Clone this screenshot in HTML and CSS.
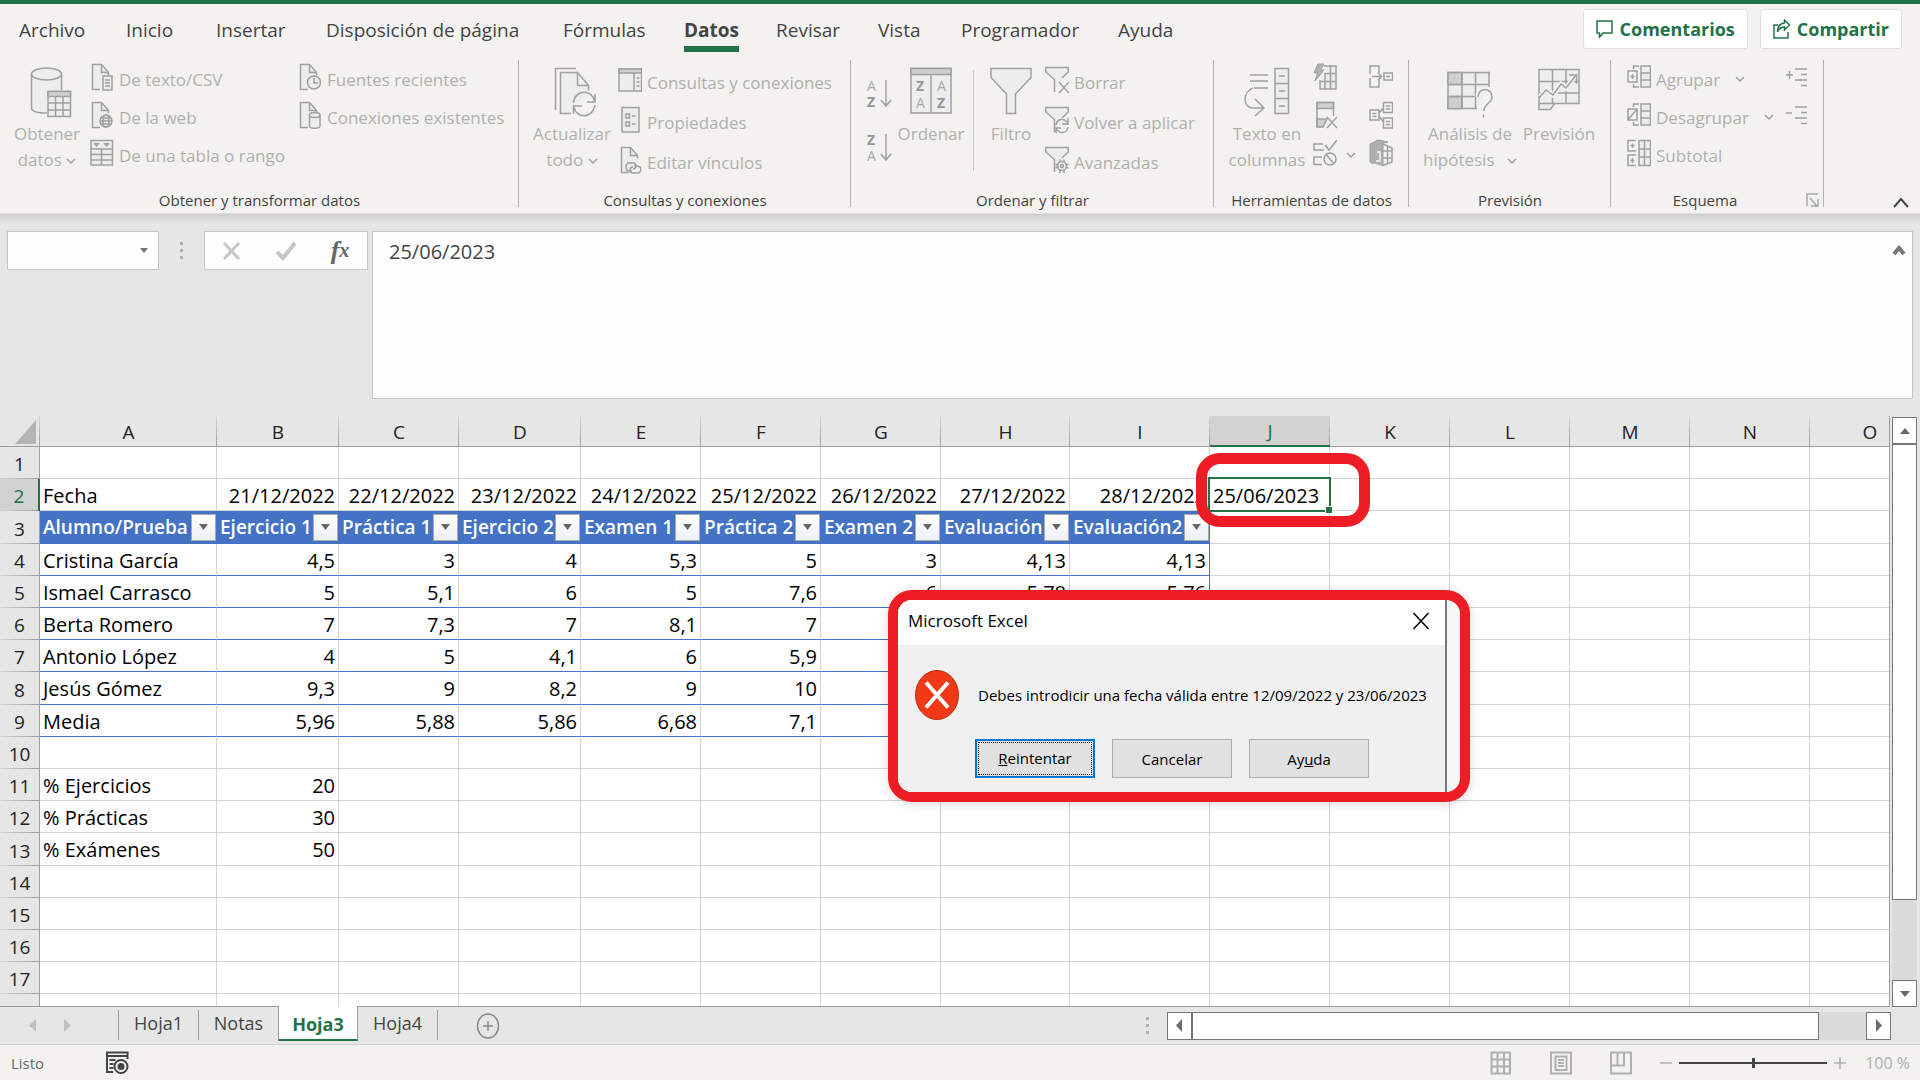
FILE: index.html
```html
<!DOCTYPE html>
<html lang="es">
<head>
    <meta charset="UTF-8">
    <meta name="viewport" content="width=device-width, initial-scale=1.0">
    <title>Notas - Excel</title>
    <link rel="stylesheet" href="styles.css">
</head>
<body>
    <svg class="symbols" aria-hidden="true">
        <symbol id="doc" viewBox="0 0 22 28">
            <path class="paper" d="M9 26.5H1.5v-25h9l7 8v3"/>
            <path d="M10.5 1.5v8h7"/>
        </symbol>
        <symbol id="funnel" viewBox="0 0 24 28">
            <path class="paper" d="M9.500 26V13.500L.8 6V1.500h22.400V6L17 12"/>
        </symbol>
        <symbol id="chevron" viewBox="0 0 10 8">
            <path d="M1 2l4 4 4-4"/>
        </symbol>
    </svg>

    <header class="tab-row">
        <nav class="tabs">
            <button type="button">Archivo</button>
            <button type="button">Inicio</button>
            <button type="button">Insertar</button>
            <button type="button">Disposición de página</button>
            <button type="button">Fórmulas</button>
            <button type="button" class="active">Datos</button>
            <button type="button">Revisar</button>
            <button type="button">Vista</button>
            <button type="button">Programador</button>
            <button type="button">Ayuda</button>
        </nav>
        <div class="share">
            <button type="button">
                <svg width="18" height="20" viewBox="0 0 18 20"><path d="M1 2h15v12H7l-3.500 4v-4H1z"/></svg>
                Comentarios
            </button>
            <button type="button">
                <svg width="18" height="20" viewBox="0 0 18 20"><path d="M5 6H1v13h14v-6"/><path d="M11.500 1l5 5-5 5V8C8 8 6 9.500 4.500 13 4.500 8 7 4.500 11.500 4z"/></svg>
                Compartir
            </button>
        </div>
    </header>

    <section class="ribbon">
        <div class="group">
            <div class="group-body get-data">
                <button type="button" class="big">
                    <svg width="50" height="52" viewBox="-8 0 50 52">
                        <path class="paper" d="M17 46C7 46 1.500 44 1.500 41V7h30v16"/>
                        <ellipse class="paper" cx="16.500" cy="7" rx="15" ry="6"/>
                        <path class="paper" d="M18 24.500h22.500v25H18z"/>
                        <path class="shade" d="M18 24.500h22.500v5H18z"/>
                        <path d="M18 36h22.500M18 43h22.500M25.500 30v19.500M33 30v19.500"/>
                    </svg>
                    <span>Obtener<br>datos <svg class="chev"><use href="#chevron"/></svg></span>
                </button>
                <div class="small-list">
                    <button type="button"><i><svg width="22" height="28" viewBox="0 0 22 28"><use href="#doc"/><path class="paper" d="M12 13h9v14h-9z"/><path d="M14 17h5M14 20h5M14 23h5"/></svg></i>De texto/CSV</button>
                    <button type="button"><i><svg width="22" height="28" viewBox="0 0 22 28"><use href="#doc"/><circle class="paper" cx="15" cy="20" r="6"/><ellipse cx="15" cy="20" rx="3" ry="6"/><path d="M9 20h12M10 17h10M10 23h10"/></svg></i>De la web</button>
                    <button type="button"><i><svg width="24" height="28" viewBox="0 0 24 28"><path class="paper" d="M1 1.500h21.500V26H1z"/><path d="M1 10h21.500M1 15.500h21.500M1 21h21.500M11.500 10v16"/><path class="solid" d="M4 4.500h5l-2.500 3zM14 4.500h5l-2.500 3z"/></svg></i>De una tabla o rango</button>
                </div>
                <div class="small-list">
                    <button type="button"><i><svg width="22" height="28" viewBox="0 0 22 28"><use href="#doc"/><circle class="paper" cx="15" cy="19.500" r="6.500"/><path d="M15 15v5h4"/></svg></i>Fuentes recientes</button>
                    <button type="button"><i><svg width="22" height="28" viewBox="0 0 22 28"><use href="#doc"/><path class="paper" d="M10.500 14v11c0 3 10.500 3 10.500 0V14"/><ellipse class="paper" cx="15.700" cy="14" rx="5.300" ry="2.500"/></svg></i>Conexiones existentes</button>
                </div>
            </div>
            <div class="group-name">Obtener y transformar datos</div>
        </div>

        <div class="group">
            <div class="group-body queries">
                <button type="button" class="big">
                    <svg width="48" height="52" viewBox="-6 0 48 52">
                        <path d="M1.500 43V1.500H22"/>
                        <path class="paper" d="M17 46.500H6.500v-41h17l11 13v5"/>
                        <path d="M23.500 5.500v13h11"/>
                        <path d="M19.500 36c1-14 19-14 21-2M41 27v8h-8M41 38c-2 14-19 14-21 2M19.500 47v-8H28"/>
                    </svg>
                    <span>Actualizar<br>todo <svg class="chev"><use href="#chevron"/></svg></span>
                </button>
                <div class="small-list tall">
                    <button type="button"><i><svg width="24" height="28" viewBox="0 0 24 28"><path class="paper" d="M1 3h22.500v22H1z"/><path class="shade" d="M1 3h22.500v4H1z"/><path d="M16 7v18M18.500 12h3M18.500 16h3M18.500 20h3"/></svg></i>Consultas y conexiones</button>
                    <button type="button"><i><svg width="24" height="28" viewBox="0 0 24 28"><path class="paper" d="M4 1.500h17V26H4z"/><path d="M8 8h3.500v4H8zM8 16h3.500v4H8zM14 10h3.500M14 18h3.500"/></svg></i>Propiedades</button>
                    <button type="button"><i><svg width="24" height="28" viewBox="0 0 24 28"><g transform="translate(2 0)"><use href="#doc" width="22" height="28"/></g><path d="M14 25h-3c-4 0-4-8 0-8h4c4 0 4 6 0 6M16 20h3c5 0 5 7 0 7h-4c-4 0-4-6 0-6"/></svg></i>Editar vínculos</button>
                </div>
            </div>
            <div class="group-name">Consultas y conexiones</div>
        </div>

        <div class="group">
            <div class="group-body sort-filter">
                <div class="sorters">
                    <button type="button" aria-label="Ordenar de A a Z"><svg width="28" height="34" viewBox="0 0 28 34"><text x="2" y="13">A</text><text class="strong" x="2" y="29">Z</text><path d="M21 2v26M16 22l5 6 5-6"/></svg></button>
                    <button type="button" aria-label="Ordenar de Z a A"><svg width="28" height="34" viewBox="0 0 28 34"><text class="strong" x="2" y="13">Z</text><text x="2" y="29">A</text><path d="M21 2v26M16 22l5 6 5-6"/></svg></button>
                </div>
                <button type="button" class="big">
                    <svg width="42" height="52" viewBox="0 0 42 52">
                        <path class="paper" d="M1 1.500h40V46H1z"/>
                        <path class="shade" d="M1 1.500h40v6H1z"/>
                        <path d="M21 7.500V46"/>
                        <text class="strong" x="6" y="24">Z</text><text x="6" y="41">A</text>
                        <text x="27" y="24">A</text><text class="strong" x="27" y="41">Z</text>
                    </svg>
                    <span>Ordenar</span>
                </button>
                <div class="rule"></div>
                <button type="button" class="big">
                    <svg width="42" height="52" viewBox="0 0 42 52"><path class="paper" d="M1 1.500h40v9L25.500 27v19.500h-9V27L1 10.500z"/></svg>
                    <span>Filtro</span>
                </button>
                <div class="small-list tall">
                    <button type="button"><i><svg width="24" height="28" viewBox="0 0 24 28"><use href="#funnel"/><path d="M14 16l10 11M24 16L14 27"/></svg></i>Borrar</button>
                    <button type="button"><i><svg width="24" height="28" viewBox="0 0 24 28"><use href="#funnel"/><path d="M11 19c1-7 9-7 11.500-2M23 12v6h-6M23 21c-1 7-9 7-11.500 2M11 27v-5h5"/></svg></i>Volver a aplicar</button>
                    <button type="button"><i><svg width="24" height="28" viewBox="0 0 24 28"><use href="#funnel"/><circle cx="17" cy="20" r="4.500"/><circle cx="17" cy="20" r="1.500"/><path d="M15 13.500v3M19 13.500v3M15 24v3M19 24v3M10.500 18l3 1M10.500 22l3-1M23.500 18l-3 1M23.500 22l-3-1"/></svg></i>Avanzadas</button>
                </div>
            </div>
            <div class="group-name">Ordenar y filtrar</div>
        </div>

        <div class="group">
            <div class="group-body data-tools">
                <button type="button" class="big">
                    <svg width="46" height="52" viewBox="0 0 46 52">
                        <path d="M6 8h18M6 14h18M10 21h14M9 21C-2 25-1 41 9 41h10M11 32l9 9-9 8"/>
                        <path class="paper" d="M31 1.500h13.500v45H31zM31 16.500h13.500M31 31.500h13.500"/>
                        <path d="M35 9h6M35 24h6M35 39h6"/>
                    </svg>
                    <span>Texto en<br>columnas</span>
                </button>
                <div class="small-list icons">
                    <button type="button" aria-label="Relleno rápido"><i><svg width="24" height="28" viewBox="0 0 24 28"><path class="paper" d="M11 3h12v23H7v-9"/><path d="M7 18.500h16M11 10.500h12M12 10v16M17.500 3v23"/><path class="solid" d="M5 1h6L7.500 7H11L2 18l2.500-8H1z"/></svg></i></button>
                    <button type="button" aria-label="Quitar duplicados"><i><svg width="24" height="28" viewBox="0 0 24 28"><path class="shade" d="M4 1.500h16.500v6H4zM4 18h10l-4 8H4z"/><path d="M4 1.500h16.500V15M4 1.500V26M14 16l10 11M24 16L14 27"/></svg></i></button>
                    <button type="button" aria-label="Validación de datos"><i><svg width="24" height="28" viewBox="0 0 24 28"><path d="M10 5H1v6h10M9 18H1v7.500h8M12 6l4 5L24 1"/><circle cx="17" cy="20" r="6"/><path d="M13 15l8 10"/></svg></i><svg class="chev"><use href="#chevron"/></svg></button>
                </div>
                <div class="small-list icons">
                    <button type="button" aria-label="Consolidar"><i><svg width="24" height="28" viewBox="0 0 24 28"><path d="M1 11V3h9v8M1 15v9h9v-8M3 13.500h9M9 10l3.500 3.500L9 17"/><path d="M15 10h8.500v7H15zM17 13.500h4"/></svg></i></button>
                    <button type="button" aria-label="Relaciones"><i><svg width="24" height="28" viewBox="0 0 24 28"><path d="M1 9h9v10H1zM14.500 1.500h9v10h-9zM14.500 17h9v10h-9zM10 12l4.500-5M10 15l4.500 6M3.500 12.500h4M3.500 15.500h4M17 5h4M17 8h4M17 20.500h4M17 23.500h4"/></svg></i></button>
                    <button type="button" aria-label="Modelo de datos"><i><svg width="24" height="28" viewBox="0 0 24 28"><path class="solid" d="M1 5l8-4 10 2-8 2-7 3v17l-3-2z"/><path class="solid" d="M5 9l9-4v21.500L5 24z"/><path d="M14 5l9 4v14l-9 3.500M14 12h9M14 19h9M18.500 7v18"/><path class="light" d="M8 13h3v9H7"/></svg></i></button>
                </div>
            </div>
            <div class="group-name">Herramientas de datos</div>
        </div>

        <div class="group">
            <div class="group-body forecast">
                <button type="button" class="big">
                    <svg width="46" height="52" viewBox="0 0 46 52">
                        <path class="paper" d="M30 41.500H1v-36h41V20"/>
                        <path class="shade" d="M1 5.500h14v12H1zM1 29.500h14v12H1z"/>
                        <path d="M1 17.500h41M1 29.500h30M15 5.500v36M28.500 5.500v36"/>
                        <path class="halo" d="M31 30c0-10 14-10 14 0 0 7-8 6-8 14"/>
                        <path d="M31 30c0-10 14-10 14 0 0 7-8 6-8 14M36.500 47.500v3"/>
                    </svg>
                    <span>Análisis de<br>hipótesis <svg class="chev wide"><use href="#chevron"/></svg></span>
                </button>
                <button type="button" class="big">
                    <svg width="42" height="52" viewBox="0 0 42 52">
                        <path class="paper" d="M1 2.500h40v34H17l-5 6H1z"/>
                        <path d="M1 14.500h40M1 26h40M1 36.500h16M14.500 2.500v34M28 2.500v34"/>
                        <path class="halo" d="M2 30l6-7 7 5 8-11 5 4L38 8"/>
                        <path d="M1 31l7-8 7 5 8-11 5 4L38 8M31 8h7.500v9"/>
                    </svg>
                    <span>Previsión</span>
                </button>
            </div>
            <div class="group-name">Previsión</div>
        </div>

        <div class="group">
            <div class="group-body outline">
                <div class="small-list">
                    <button type="button"><i><svg width="24" height="28" viewBox="0 0 24 28"><path class="paper" d="M14 3h9.500v21H14z"/><path d="M14 10h9.500M14 17h9.500M6.500 6V3H12M6.500 21v3H12M1 8h9v11H1zM3.500 13.500h4M5.500 11v5"/></svg></i>Agrupar <svg class="chev wide"><use href="#chevron"/></svg></button>
                    <button type="button"><i><svg width="24" height="28" viewBox="0 0 24 28"><path class="paper" d="M14 3h9.500v21H14z"/><path d="M14 10h9.500M14 17h9.500M6.500 6V3H12M6.500 21v3H12M1 8h9v11H1zM1 19l9-11"/></svg></i>Desagrupar <svg class="chev wide"><use href="#chevron"/></svg></button>
                    <button type="button"><i><svg width="24" height="28" viewBox="0 0 24 28"><path class="paper" d="M12 1.500h11.500v25H12z"/><path d="M12 10h11.500M12 18h11.500M17.500 1.500v25M9 1.500H1V12h8M9 16H1v10.500h8M3.500 6.500h4M5.500 4.500v4.500M3.500 21.500h4M5.500 19v5"/></svg></i>Subtotal</button>
                </div>
                <div class="small-list icons">
                    <button type="button" aria-label="Mostrar detalle"><i><svg width="24" height="28" viewBox="0 0 24 28"><path d="M1 12h7M4.500 8v8M10 6h12M16 11.500h6M10 17h12M16 22.500h6"/></svg></i></button>
                    <button type="button" aria-label="Ocultar detalle"><i><svg width="24" height="28" viewBox="0 0 24 28"><path d="M1 12h6M10 6h12M16 11.500h6M10 17h12M16 22.500h6"/></svg></i></button>
                </div>
            </div>
            <div class="group-name with-launcher">
                <span>Esquema</span>
                <button type="button" aria-label="Opciones de esquema"><svg width="13" height="14" viewBox="0 0 13 14"><path d="M1 13V1h11M4 5l7 8M12 6v7H5"/></svg></button>
            </div>
        </div>

        <div class="collapse">
            <button type="button" aria-label="Contraer la cinta"><svg width="16" height="12" viewBox="0 0 16 12"><path d="M1 10l7-8 7 8"/></svg></button>
        </div>
    </section>

    <section class="formula-bar">
        <div class="name-box">
            <input type="text" aria-label="Cuadro de nombres">
            <button type="button" aria-label="Lista de nombres"><svg width="8" height="6" viewBox="0 0 8 6"><path d="M0 0h8L4 5z"/></svg></button>
        </div>
        <div class="dots"><b></b><b></b><b></b></div>
        <div class="edit-buttons">
            <button type="button" aria-label="Cancelar entrada"><svg width="20" height="20" viewBox="0 0 20 20"><path class="cross" d="M2 2l15 16M17 2L2 18"/></svg></button>
            <button type="button" aria-label="Introducir"><svg width="20" height="20" viewBox="0 0 20 20"><path class="tick" d="M1 11l6 6L19 2"/></svg></button>
            <button type="button" class="fx" aria-label="Insertar función">f<small>x</small></button>
        </div>
        <div class="formula-box">
            <textarea aria-label="Barra de fórmulas">25/06/2023</textarea>
            <button type="button" aria-label="Contraer barra"><svg width="14" height="12" viewBox="0 0 14 12"><path d="M2 9l5-6 5 6"/></svg></button>
        </div>
    </section>

    <main class="sheet-area">
        <div class="sheet">
            <table>
                <colgroup id="cols"></colgroup>
                <thead><tr id="letters"></tr></thead>
                <tbody id="rows"></tbody>
            </table>
        </div>
        <div class="vscroll">
            <button type="button" aria-label="Subir"><svg width="12" height="8" viewBox="0 0 12 8"><path d="M1 7l5-6 5 6z"/></svg></button>
            <div class="track"><div class="thumb"></div></div>
            <button type="button" aria-label="Bajar"><svg width="12" height="8" viewBox="0 0 12 8"><path d="M1 1l5 6 5-6z"/></svg></button>
        </div>
    </main>

    <section class="sheet-bar">
        <div class="sheet-nav">
            <button type="button" aria-label="Hoja anterior"><svg width="7" height="13" viewBox="0 0 7 13"><path d="M7 0v13L0 6.500z"/></svg></button>
            <button type="button" aria-label="Hoja siguiente"><svg width="7" height="13" viewBox="0 0 7 13"><path d="M0 0v13l7-6.500z"/></svg></button>
        </div>
        <div class="sheet-tabs">
            <button type="button">Hoja1</button>
            <button type="button">Notas</button>
            <button type="button" class="active">Hoja3</button>
            <button type="button">Hoja4</button>
        </div>
        <button type="button" class="add-sheet" aria-label="Hoja nueva"><svg width="24" height="26" viewBox="0 0 24 26"><ellipse cx="12" cy="13" rx="10.500" ry="12"/><path d="M7 13h10M12 8v10"/></svg></button>
        <div class="dots small"><b></b><b></b><b></b></div>
        <div class="hscroll">
            <button type="button" aria-label="Izquierda"><svg width="7" height="13" viewBox="0 0 7 13"><path d="M6 0v13L0 6.500z"/></svg></button>
            <div class="track"><div class="thumb"></div></div>
            <button type="button" aria-label="Derecha"><svg width="7" height="13" viewBox="0 0 7 13"><path d="M1 0v13l6-6.500z"/></svg></button>
        </div>
    </section>

    <footer class="status">
        <span>Listo</span>
        <button type="button" class="macro" aria-label="Grabar macro"><svg width="23" height="24" viewBox="0 0 23 24"><path d="M7 21H1V1.500h20.500V8M1 5h20.500M3.500 9h6M3.500 13h4M3.500 17h4"/><circle cx="15" cy="15.500" r="6.500"/><circle class="dot" cx="15" cy="15.500" r="2.500"/></svg></button>
        <div class="views">
            <button type="button" aria-label="Normal"><svg width="22" height="24" viewBox="0 0 22 24"><path d="M1.500 1.500h18.500v21H1.500zM1.500 8.500H20M1.500 15.500H20M7.500 1.500v21M14 1.500v21"/></svg></button>
            <button type="button" aria-label="Diseño de página"><svg width="22" height="24" viewBox="0 0 22 24"><path d="M1 1.500h20v21H1zM5.500 5.500h11v13.500h-11zM8 9h6M8 12h6M8 15h6"/></svg></button>
            <button type="button" aria-label="Salto de página"><svg width="22" height="24" viewBox="0 0 22 24"><path d="M1 1.500h20v21H1zM1 14.500h13v-13M7.500 1.500v13"/></svg></button>
        </div>
        <div class="zoom">
            <button type="button" aria-label="Alejar"><svg width="12" height="12" viewBox="0 0 12 12"><path d="M0 6h12"/></svg></button>
            <input type="range" min="0" max="100" value="50" aria-label="Zoom">
            <button type="button" aria-label="Acercar"><svg width="12" height="12" viewBox="0 0 12 12"><path d="M0 6h12M6 0v12"/></svg></button>
            <span>100 %</span>
        </div>
    </footer>

    <div class="alert-mark">
        <div class="alert" role="alertdialog" aria-labelledby="alertTitle" aria-describedby="alertText">
            <div class="alert-title">
                <span id="alertTitle">Microsoft Excel</span>
                <button type="button" aria-label="Cerrar"><svg width="18" height="18" viewBox="0 0 18 18"><path d="M1.500 1l15 16M16.500 1l-15 16"/></svg></button>
            </div>
            <div class="alert-body">
                <div class="alert-message">
                    <svg width="44" height="50" viewBox="0 0 44 50"><ellipse cx="22" cy="25" rx="21.500" ry="24.500"/><path d="M11 12.500l22 25M33 12.500l-22 25"/></svg>
                    <span id="alertText">Debes introdicir una fecha válida entre 12/09/2022 y 23/06/2023</span>
                </div>
                <div class="alert-buttons">
                    <button type="button" class="default"><span><u>R</u>eintentar</span></button>
                    <button type="button"><span>Cancelar</span></button>
                    <button type="button"><span>Ay<u>u</u>da</span></button>
                </div>
            </div>
        </div>
    </div>

    <script src="script.js"></script>
</body>
</html>
```
FILE: styles.css
```css
* {
    box-sizing: border-box;
}
body {
    margin: 0;
    height: 100vh;
    display: flex;
    flex-direction: column;
    overflow: hidden;
    position: relative;
    background-color: #e6e6e6;
    color: #444;
    font-family: "Open Sans", "Noto Sans", sans-serif;
    font-size: 18px;
}
button {
    padding: 0;
    border: none;
    background: none;
    color: inherit;
    font: inherit;
    white-space: nowrap;
    cursor: pointer;
}
svg {
    display: block;
    flex: none;
    fill: none;
    stroke: currentColor;
    stroke-width: 2;
}
.symbols {
    position: absolute;
    width: 0;
    height: 0;
}

/* Pestañas de la cinta */
.tab-row {
    display: flex;
    justify-content: space-between;
    align-items: flex-start;
    height: 60px;
    padding: 5px 18px 0 19px;
    border-top: 4px solid #217346;
    background-color: #f3f2f1;
    font-size: 19px;
}
.tabs {
    display: grid;
    grid-template-columns: 107px 90px 110px 237px 121px 92px 102px 83px 157px 70px;
}
.tabs button {
    position: relative;
    height: 44px;
    text-align: left;
    justify-self: start;
    line-height: 42px;
    padding-bottom: 2px;
}
.tabs .active {
    font-weight: 700;
}
.tabs .active::after {
    content: "";
    position: absolute;
    left: 0;
    right: 0;
    bottom: 1px;
    height: 6px;
    background-color: #217346;
}
.share {
    display: flex;
    gap: 12px;
}
.share button {
    display: flex;
    align-items: center;
    gap: 6px;
    height: 40px;
    padding: 0 12px;
    border: 1px solid #e1dfdd;
    border-radius: 3px;
    background-color: #fff;
    color: #217346;
    font-size: 18px;
    font-weight: 700;
}
.share svg {
    stroke-width: 1.5;
}

/* Cinta */
.ribbon {
    display: grid;
    grid-template-columns: 519px 332px 363px 195px 202px 213px 1fr;
    height: 154px;
    border-bottom: 1px solid #e1dfdd;
    background-color: #f3f2f1;
    flex: none;
}
.group {
    display: flex;
    flex-direction: column;
    justify-content: space-between;
    background: linear-gradient(#b3b0ad, #b3b0ad) right top / 1px 147px no-repeat;
}
.group-body {
    display: flex;
    align-items: flex-start;
    color: #b1afad;
    font-size: 17px;
}
.group-body > * {
    flex: none;
}
.group-body svg {
    color: #a0a0a0;
    stroke-width: 1.5;
}
.group-name {
    height: 26px;
    line-height: 26px;
    font-size: 15px;
    text-align: center;
}
.with-launcher {
    display: grid;
    grid-template-columns: 1fr 13px;
    align-items: center;
    padding: 0 5px 0 0;
}
.with-launcher span {
    padding-right: 7px;
}
.with-launcher svg {
    color: #a8a8a8;
    stroke-width: 1.5;
}
.get-data {
    padding-left: 14px;
}
.get-data .big {
    width: 66px;
    margin-right: 10px;
}
.get-data .small-list {
    width: 208px;
}
.queries {
    padding-left: 12px;
}
.queries .big {
    width: 82px;
    margin-right: 5px;
}
.sort-filter {
    padding-left: 14px;
}
.sort-filter .big {
    width: 68px;
}
.data-tools {
    padding-left: 10px;
}
.data-tools .big {
    width: 86px;
    margin-right: 3px;
}
.forecast {
    padding-left: 14px;
}
.forecast .big {
    width: 94px;
}
.forecast .big:last-child {
    width: 84px;
}
.outline {
    padding-left: 16px;
}
.outline .small-list:first-child {
    width: 158px;
}
.big {
    display: flex;
    flex-direction: column;
    align-items: center;
    padding-top: 7px;
    line-height: 26px;
}
.big > svg {
    margin-bottom: 2px;
}
.small-list button {
    display: flex;
    align-items: center;
    height: 38px;
}
.small-list.tall {
    padding-top: 2px;
}
.small-list.tall button {
    height: 40px;
}
.small-list i {
    display: flex;
    justify-content: center;
    width: 24px;
    margin-right: 5px;
    margin-bottom: 4px;
}
.icons {
    width: 56px;
}
.chev {
    display: inline-block;
    width: 10px;
    height: 8px;
    vertical-align: middle;
}
.chev.wide {
    margin-left: 8px;
}
.small-list .chev {
    margin-left: 4px;
}
.small-list .chev.wide {
    margin-left: 15px;
}
.paper {
    fill: #ededee;
}
.shade {
    fill: #cfcfcf;
}
.solid {
    fill: #b0b0b0;
    stroke-width: 1;
}
.light {
    stroke: #f3f2f1;
}
.halo {
    stroke: #f3f2f1;
    stroke-width: 5;
}
.group-body text {
    fill: #a8a8a8;
    stroke: none;
    font-size: 14px;
    line-height: 14px;
}
.group-body .strong {
    fill: #959595;
    font-weight: 700;
}
.sorters {
    display: flex;
    flex-direction: column;
    gap: 20px;
    padding-top: 18px;
    margin-right: 4px;
}
.rule {
    width: 1px;
    height: 101px;
    margin: 10px 3px 0 8px;
    background-color: #c8c6c4;
}
.collapse {
    display: flex;
    justify-content: flex-end;
    align-items: flex-end;
    padding: 0 11px 4px 0;
}

/* Barra de fórmulas */
.formula-bar {
    display: flex;
    align-items: flex-start;
    padding: 17px 7px;
    background: linear-gradient(#cdcdcd, #e6e6e6 10px);
    flex: none;
}
.name-box, .edit-buttons, .formula-box {
    display: flex;
    border: 1px solid #c6c6c6;
    background-color: #fdfdfd;
}
.name-box {
    width: 152px;
    height: 39px;
}
.name-box input {
    flex: 1;
    min-width: 0;
    border: none;
    background: none;
}
.name-box button {
    width: 28px;
    color: #777;
}
.name-box svg, .formula-box svg {
    margin: 0 auto;
}
.name-box path {
    fill: currentColor;
    stroke: none;
}
.dots {
    display: flex;
    flex-direction: column;
    justify-content: center;
    align-items: center;
    gap: 4px;
    width: 45px;
    height: 39px;
}
.dots b {
    width: 3px;
    height: 3px;
    background-color: #b0b0b0;
}
.edit-buttons {
    width: 164px;
    height: 39px;
    margin-right: 4px;
}
.edit-buttons button {
    flex: 1;
    display: flex;
    align-items: center;
    justify-content: center;
    color: #c6c6c6;
}
.edit-buttons .cross {
    stroke-width: 3;
}
.edit-buttons .tick {
    stroke-width: 4;
}
.edit-buttons .fx {
    color: #666;
    font: italic bold 26px "Liberation Serif", serif;
}
.fx small {
    font-size: 20px;
}
.formula-box {
    flex: 1;
    height: 168px;
}
.formula-box textarea {
    flex: 1;
    padding: 6px 16px;
    border: none;
    outline: none;
    resize: none;
    background: none;
    color: #444;
    font: 20px/28px "Open Sans", "Noto Sans", sans-serif;
}
.formula-box button {
    width: 26px;
    height: 38px;
    color: #777;
}
.formula-box svg {
    stroke-width: 4;
}

/* Hoja */
.sheet-area {
    display: flex;
    flex: 1;
    min-height: 0;
}
.sheet {
    flex: 1;
    min-width: 0;
    overflow: hidden;
    border-right: 1px solid #9e9e9e;
    border-bottom: 1px solid #9e9e9e;
}
table {
    table-layout: fixed;
    width: 0;
    border-collapse: separate;
    border-spacing: 0;
    color: #000;
    font-size: 20px;
    line-height: 28px;
}
th, td {
    height: 32px;
    padding: 2px 3px 0 3px;
    overflow: hidden;
    white-space: nowrap;
}
tbody tr:nth-child(5n+3) > * {
    height: 33px;
}
thead th {
    height: 31px;
    padding: 2px 0 0 0;
    border-bottom: 1px solid #9e9e9e;
    background: linear-gradient(#d4d4d4, #9e9e9e) right / 1px 100% no-repeat #e6e6e6;
    color: #222;
    font-size: 19px;
    font-weight: 400;
    line-height: 27px;
}
tbody th {
    padding: 2px 0 0 0;
    border-right: 1px solid #9e9e9e;
    background: linear-gradient(to right, #d4d4d4, #9e9e9e) bottom / 100% 1px no-repeat #e6e6e6;
    color: #222;
    font-size: 19px;
    font-weight: 400;
}
thead .selected {
    border-bottom: 2px solid #217346;
    background-color: #d2d2d2;
    color: #217346;
}
tbody .selected {
    border-right: 2px solid #217346;
    background-color: #d2d2d2;
    color: #217346;
}
.corner path {
    fill: #b4b4b4;
    stroke: none;
}
.corner svg {
    margin-left: 15px;
}
td {
    border-right: 1px solid #d4d4d4;
    border-bottom: 1px solid #d4d4d4;
    background-color: #fff;
    text-align: right;
}
td.text {
    text-align: left;
}
tr.list td:nth-child(-n+10) {
    border-bottom-color: #4472c4;
}
tr.list td:nth-child(10) {
    border-right-color: #4472c4;
}
td.heading {
    padding: 0 0 0 3px;
    border-color: #4472c4;
    background-color: #4472c4;
    color: #fff;
    font-weight: 600;
    font-size: 19px;
}
.heading div {
    display: flex;
    align-items: center;
    justify-content: space-between;
}
.heading span {
    min-width: 0;
}
.heading button {
    flex: none;
    width: 25px;
    height: 27px;
    border: 1px solid #ababab;
    background: linear-gradient(#fff, #eef0f4);
    color: #666;
}
.heading svg {
    margin: 0 auto;
    fill: currentColor;
    stroke: none;
}
td.editing {
    position: relative;
    overflow: visible;
    text-align: left;
}
.editing::before {
    content: "";
    position: absolute;
    inset: -2px;
    border: 2px solid #217346;
}
.editing::after {
    content: "";
    position: absolute;
    right: -3px;
    bottom: -3px;
    width: 6px;
    height: 6px;
    border: 1px solid #fff;
    border-width: 1px 0 0 1px;
    background-color: #217346;
}
.mark {
    position: absolute;
    z-index: 1;
    inset: -26px -41px -17px -14px;
    border: 11px solid #ee1c25;
    border-radius: 24px;
}

/* Barras de desplazamiento */
.vscroll {
    display: flex;
    flex-direction: column;
    flex: none;
    width: 25px;
    margin: 1px 3px 0 2px;
}
.vscroll button, .hscroll button {
    display: flex;
    align-items: center;
    justify-content: center;
    flex: none;
    border: 1px solid #777;
    background-color: #fff;
    color: #6a6a6a;
}
.vscroll button {
    height: 27px;
}
.vscroll path, .hscroll path, .sheet-nav path {
    fill: currentColor;
    stroke: none;
}
.track {
    flex: 1;
    background-color: #dadada;
}
.thumb {
    border: 1px solid #777;
    background-color: #fff;
}
.vscroll .thumb {
    height: 85%;
}
.hscroll {
    display: flex;
    width: calc(38% - 6px);
    height: 28px;
    margin-right: 29px;
}
.hscroll button {
    width: 25px;
}
.hscroll .thumb {
    width: 93%;
    height: 100%;
}

/* Hojas del libro */
.sheet-bar {
    display: flex;
    align-items: center;
    flex: none;
    height: 38px;
    border-bottom: 1px solid #d0d0d0;
}
.sheet-nav {
    display: flex;
    gap: 28px;
    width: 118px;
    padding-left: 29px;
    color: #c0c0c0;
}
.sheet-tabs {
    display: flex;
    align-self: flex-start;
}
.sheet-tabs button {
    width: 80px;
    height: 30px;
    margin-top: 3px;
    padding-bottom: 3px;
    border-left: 1px solid #9e9e9e;
    line-height: 27px;
}
.sheet-tabs button:last-child {
    border-right: 1px solid #9e9e9e;
}
.sheet-tabs .active {
    position: relative;
    height: 35px;
    margin-top: -1px;
    padding: 3px 0 0 0;
    border-bottom: 2px solid #217346;
    border-right: 1px solid #9e9e9e;
    background-color: #fff;
    color: #217346;
    font-weight: 700;
}
.sheet-tabs .active + button {
    border-left: none;
}
.add-sheet {
    margin-left: 38px;
    margin-right: auto;
    color: #8a8a8a;
}
.add-sheet svg {
    stroke-width: 1.5;
}
.dots.small {
    width: 39px;
}

/* Barra de estado */
.status {
    display: flex;
    align-items: center;
    flex: none;
    height: 35px;
    padding: 0 10px 0 11px;
    background-color: #f3f2f1;
    color: #666;
    font-size: 15px;
}
.macro {
    margin-left: 62px;
    color: #444;
}
.macro .dot {
    fill: currentColor;
}
.views {
    display: flex;
    gap: 38px;
    margin-left: auto;
    margin-right: 28px;
    color: #b0b0b0;
}
.zoom {
    display: flex;
    align-items: center;
    gap: 7px;
    color: #b0b0b0;
}
.zoom span {
    padding-left: 12px;
    font-size: 16px;
}
.zoom button svg {
    stroke-width: 1.5;
}
.zoom input {
    appearance: none;
    width: 148px;
    height: 10px;
    margin: 0;
    background: linear-gradient(#444, #444) center / 100% 2px no-repeat;
}
.zoom input::-webkit-slider-thumb {
    appearance: none;
    width: 3px;
    height: 10px;
    background-color: #444;
}

/* Mensaje de error */
.alert-mark {
    position: absolute;
    left: 888px;
    top: 590px;
    padding-right: 13px;
    border: 10px solid #ee1c25;
    border-radius: 24px;
    background-color: #f7f7f7;
    overflow: hidden;
    box-shadow: 0 2px 12px rgba(0, 0, 0, 0.15);
}
.alert {
    width: 549px;
    padding-bottom: 1px;
    border-right: 2px solid #777;
    background-color: #f0f0f0;
    color: #000;
    font-size: 15px;
}
.alert-title {
    display: flex;
    justify-content: space-between;
    align-items: center;
    height: 45px;
    padding: 0 15px 4px 10px;
    background-color: #fff;
    font-size: 17px;
}
.alert-title svg {
    stroke-width: 1.5;
}
.alert-body {
    padding: 25px 14px 13px 17px;
}
.alert-message {
    display: flex;
    align-items: center;
    gap: 19px;
    white-space: nowrap;
}
.alert-message ellipse {
    fill: #f03a17;
    stroke: #b5301a;
    stroke-width: 1;
}
.alert-message path {
    stroke: #fff;
    stroke-width: 4;
}
.alert-buttons {
    display: flex;
    gap: 17px;
    padding: 19px 0 0 60px;
}
.alert-buttons button {
    width: 120px;
    height: 39px;
    border: 1px solid #adadad;
    background-color: #e1e1e1;
}
.alert-buttons .default {
    padding: 1px;
    border: 2px solid #0078d7;
}
.default span {
    display: block;
    height: 33px;
    line-height: 31px;
    border: 1px dotted #000;
}
```
FILE: script.js
```javascript
const letters = 'ABCDEFGHIJKLMNO'.split('');
const widths = [40, 177, 122, 120, 122, 120, 120, 120, 129, 140, 120, 120, 120, 120, 120, 120];

const data = {
    2: ['Fecha', '21/12/2022', '22/12/2022', '23/12/2022', '24/12/2022', '25/12/2022', '26/12/2022', '27/12/2022', '28/12/2022', '25/06/2023'],
    3: ['Alumno/Prueba', 'Ejercicio 1', 'Práctica 1', 'Ejercicio 2', 'Examen 1', 'Práctica 2', 'Examen 2', 'Evaluación', 'Evaluación2'],
    4: ['Cristina García', '4,5', '3', '4', '5,3', '5', '3', '4,13', '4,13'],
    5: ['Ismael Carrasco', '5', '5,1', '6', '5', '7,6', '6', '5,78', '5,76'],
    6: ['Berta Romero', '7', '7,3', '7', '8,1', '7'],
    7: ['Antonio López', '4', '5', '4,1', '6', '5,9'],
    8: ['Jesús Gómez', '9,3', '9', '8,2', '9', '10'],
    9: ['Media', '5,96', '5,88', '5,86', '6,68', '7,1'],
    11: ['% Ejercicios', '20'],
    12: ['% Prácticas', '30'],
    13: ['% Exámenes', '50']
};

document.getElementById('cols').innerHTML =
    widths.map(w => `<col style="width: ${w}px">`).join('');

document.getElementById('letters').innerHTML =
    '<th class="corner"><svg width="21" height="24" viewBox="0 0 21 24"><path d="M21 0v24H0z"/></svg></th>' +
    letters.map(l => `<th scope="col"${l === 'J' ? ' class="selected"' : ''}>${l}</th>`).join('');

function cell(row, index) {
    const value = (data[row] || [])[index] || '';
    if (row === 2 && index === 9) {
        return `<td class="editing">${value}<div class="mark"></div></td>`;
    }
    if (row === 3 && value) {
        return `<td class="heading"><div><span>${value}</span><button type="button" aria-label="Filtrar ${value}">` +
            '<svg width="9" height="7" viewBox="0 0 9 7"><path d="M0 0h9L4.500 6z"/></svg></button></div></td>';
    }
    return `<td${index === 0 ? ' class="text"' : ''}>${value}</td>`;
}

let html = '';
for (let row = 1; row <= 18; row++) {
    const list = row >= 4 && row <= 9 ? ' class="list"' : '';
    html += `<tr${list}><th scope="row"${row === 2 ? ' class="selected"' : ''}>${row}</th>`;
    html += letters.map((l, i) => cell(row, i)).join('') + '</tr>';
}
document.getElementById('rows').innerHTML = html;
```
